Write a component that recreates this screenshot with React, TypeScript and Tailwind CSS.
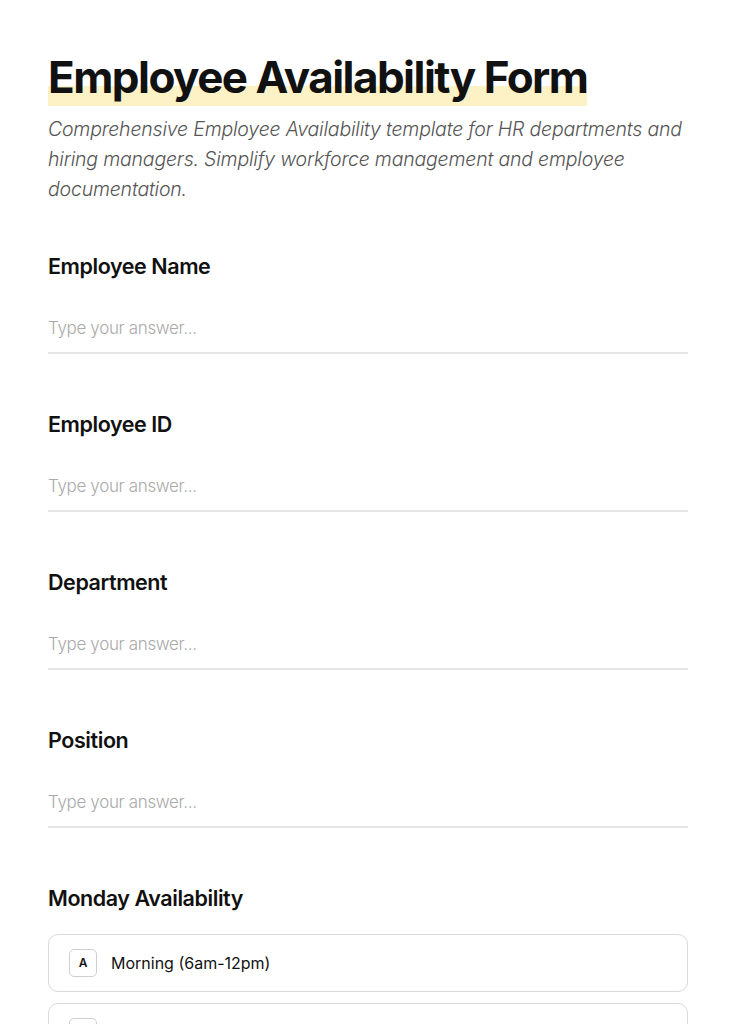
import React from 'react'

const FIELDS = ['Employee Name', 'Employee ID', 'Department', 'Position']

const OPTIONS = [
  { key: 'A', label: 'Morning (6am-12pm)' },
  { key: 'B', label: 'Afternoon (12pm-6pm)' },
  { key: 'C', label: 'Evening (6pm-12am)' },
]

export default function App() {
  return (
    <div className="min-h-screen bg-white font-['Inter',sans-serif] text-[#111]">
      <div className="px-12 pt-[50px]">
        <h1 className="text-[44px] font-bold leading-[54px] tracking-[-0.035em]">
          <span className="bg-[linear-gradient(transparent_65%,#fdf1c6_65%)] pb-[2px]">Employee Availability Form</span>
        </h1>
        <p className="mt-[10px] text-[19.5px] italic font-light leading-[30px] text-[#555] tracking-[-0.01em]">
          Comprehensive Employee Availability template for HR departments and hiring managers. Simplify workforce management and employee documentation.
        </p>

        <div className="mt-[46px]">
          {FIELDS.map((f) => (
            <div key={f} className="mb-[54px]">
              <label className="block text-[21.5px] font-semibold leading-[32px] tracking-[-0.02em]">{f}</label>
              <input
                type="text"
                placeholder="Type your answer..."
                className="mt-[32px] w-full border-b-2 border-[#e5e5e5] pb-[10px] text-[17px] font-light leading-[28px] placeholder:text-[#aaa] outline-none tracking-[-0.02em]"
              />
            </div>
          ))}

          <div>
            <div className="text-[21.5px] font-semibold leading-[32px] tracking-[-0.02em]">Monday Availability</div>
            <div className="mt-[20px] flex flex-col gap-[11px]">
              {OPTIONS.map((o) => (
                <div key={o.key} className="flex items-center gap-[14px] rounded-[10px] border border-[#d9d9d9] px-5 h-[58px]">
                  <span className="flex h-[28px] w-[28px] items-center justify-center rounded-[5px] border border-[#cfcfcf] text-[12px] font-semibold">
                    {o.key}
                  </span>
                  <span className="text-[16px]">{o.label}</span>
                </div>
              ))}
            </div>
          </div>
        </div>
      </div>
    </div>
  )
}
